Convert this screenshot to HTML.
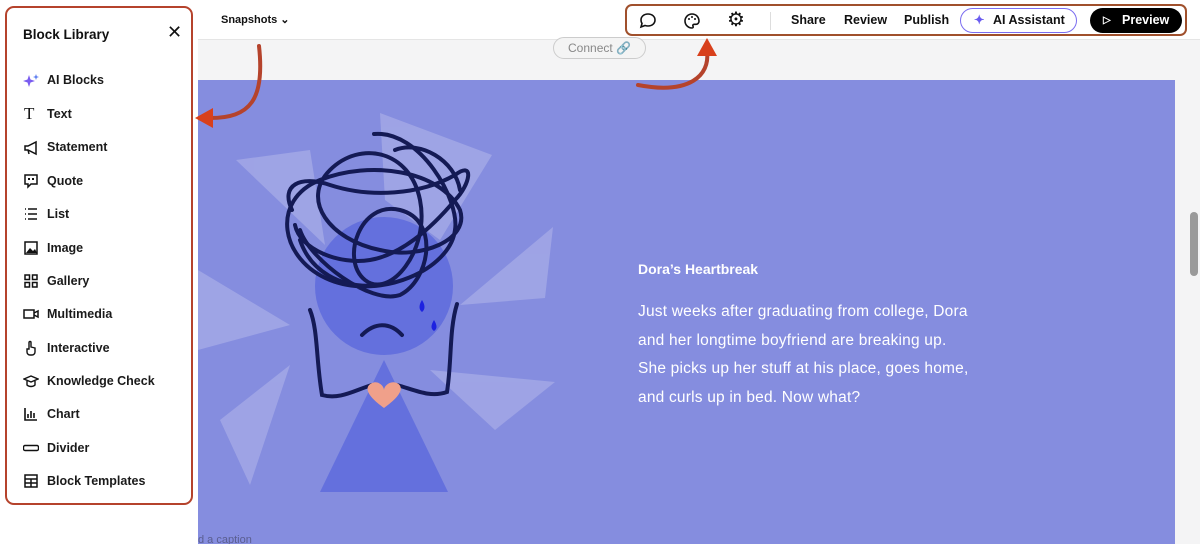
<!DOCTYPE html>
<html><head><meta charset="utf-8"><style>
*{margin:0;padding:0;box-sizing:border-box}
body{width:1200px;height:544px;overflow:hidden;background:#f4f4f5;font-family:"Liberation Sans",sans-serif;position:relative;color:#111}
.abs{position:absolute}
.top{left:0;top:0;width:1200px;height:40px;background:#fff;border-bottom:1px solid #e5e5e5}
.purple{left:198px;top:80px;width:977px;height:464px;background:#858ddf;overflow:hidden}
.panel{left:0;top:0;width:198px;height:544px;background:#fff}
.pborder{left:5px;top:6px;width:188px;height:499px;border:2px solid #b5432c;border-radius:9px}
.item{position:absolute;left:47px;font-size:12.5px;font-weight:bold;color:#1a1a1a}
.ic{position:absolute;left:23px;width:16px;height:16px}
.tb{position:absolute;top:4px;left:625px;width:562px;height:32px;border:2px solid #a0502c;border-radius:7px;background:#fff}
.tbt{position:absolute;top:13px;font-size:12.5px;font-weight:bold}
</style></head><body>
<div class="abs top"></div>
<div class="abs" style="left:221px;top:13px;font-size:11px;font-weight:bold">Snapshots ⌄</div>
<div class="abs" style="left:553px;top:37px;width:93px;height:22px;border:1px solid #ccc;border-radius:11px;background:#f4f4f4;font-size:12px;color:#888;text-align:center;line-height:20px">Connect 🔗</div>
<div class="abs purple">
<svg width="977" height="464" viewBox="198 80 977 464" style="position:absolute;left:0;top:0">
<g fill="#b3b7ea" opacity=".55">
<polygon points="380,113 492,155 440,240 385,200"/>
<polygon points="236,160 310,150 325,245"/>
<polygon points="553,227 545,298 460,305"/>
<polygon points="198,270 290,325 198,350"/>
<polygon points="290,365 220,420 250,485"/>
<polygon points="430,370 555,382 495,430"/>
</g>
<circle cx="384" cy="286" r="69" fill="#6470dd"/>
<polygon points="384,360 320,492 448,492" fill="#6470dd"/>
<g fill="none" stroke="#141a55" stroke-width="4" stroke-linecap="round">
<path d="M374,134 C420,130 460,200 455,230 C450,270 380,300 330,280 C280,260 270,200 320,180 C370,160 440,170 460,210 C470,240 420,260 380,250 C330,240 300,200 330,170 C360,140 410,150 420,200 C430,250 390,300 365,280 C340,260 360,200 400,210 C440,220 430,280 400,295 C370,305 310,260 300,230"/>
<path d="M292,210 C280,185 300,175 330,185 C370,198 420,195 455,175 C475,160 470,185 455,200 C430,230 400,255 370,260 C340,265 300,250 295,225 M395,150 C420,140 455,160 460,190 M300,240 C310,270 340,290 380,285"/>
<path d="M310,310 C318,330 316,360 322,395 C340,400 355,390 372,385"/>
<path d="M457,304 C449,330 452,360 447,392 C430,398 415,390 397,385"/>
<path d="M362,335 C375,322 390,322 402,335"/>
</g>
<path d="M422,300 q-5,8 0,12 q5,-4 0,-12z M434,320 q-5,8 0,11 q5,-3 0,-11z" fill="#1d22e0"/>
<path d="M384,408 C370,398 362,388 372,383 C378,380 384,386 384,390 C384,386 390,380 397,383 C406,388 398,398 384,408z" fill="#f0a08a"/>
</svg>
<div class="abs" style="left:440px;top:181px;color:#fff;font-weight:bold;font-size:14px">Dora’s Heartbreak</div>
<div class="abs" style="left:440px;top:218px;white-space:nowrap;color:#fff;font-size:15.5px;line-height:28.5px;letter-spacing:.2px">Just weeks after graduating from college, Dora<br>and her longtime boyfriend are breaking up.<br>She picks up her stuff at his place, goes home,<br>and curls up in bed. Now what?</div>
<div class="abs" style="left:0;top:454px;color:#5a5e90;font-size:11px">d a caption</div>
</div>
<div class="abs" style="left:1190px;top:212px;width:8px;height:64px;background:#9a9a9a;border-radius:4px"></div>
<div class="abs panel">
<div class="abs" style="left:23px;top:27px;font-size:13.5px;font-weight:bold">Block Library</div>
<div class="abs" style="left:167px;top:22px;font-size:18px">✕</div>
<svg class="ic" style="top:73px" viewBox="0 0 16 16"><path d="M6 2 L7.5 6.5 L12 8 L7.5 9.5 L6 14 L4.5 9.5 L0 8 L4.5 6.5Z" fill="#7a5cf0"/><path d="M13 1 l.8 2.2 2.2.8-2.2.8L13 7l-.8-2.2L10 4l2.2-.8Z" fill="#5b7cf0"/></svg>
<div class="item" style="top:73px">AI Blocks</div>
<div class="ic" style="top:104px;font-size:17px;font-family:'Liberation Serif';left:24px">T</div>
<div class="item" style="top:107px">Text</div>
<svg class="ic" style="top:140px" viewBox="0 0 16 16"><path d="M2 6h3l8-4v12l-8-4H2z M5 10l1 4" fill="none" stroke="#111" stroke-width="1.5"/></svg>
<div class="item" style="top:140px">Statement</div>
<svg class="ic" style="top:173px" viewBox="0 0 16 16"><path d="M2 2h12v9H8l-3 3v-3H2z" fill="none" stroke="#111" stroke-width="1.5"/><path d="M5 5h2v2H5zM9 5h2v2H9z" fill="#111"/></svg>
<div class="item" style="top:174px">Quote</div>
<svg class="ic" style="top:206px" viewBox="0 0 16 16"><path d="M2 3h1M2 8h1M2 13h1M5 3h9M5 8h9M5 13h9" stroke="#111" stroke-width="1.6"/></svg>
<div class="item" style="top:207px">List</div>
<svg class="ic" style="top:240px" viewBox="0 0 16 16"><rect x="2" y="2" width="12" height="12" fill="none" stroke="#111" stroke-width="1.5"/><path d="M3 13l4-5 3 3 2-2 2 4z" fill="#111"/></svg>
<div class="item" style="top:241px">Image</div>
<svg class="ic" style="top:273px" viewBox="0 0 16 16"><g fill="none" stroke="#111" stroke-width="1.5"><rect x="2" y="2" width="4.5" height="4.5"/><rect x="9.5" y="2" width="4.5" height="4.5"/><rect x="2" y="9.5" width="4.5" height="4.5"/><rect x="9.5" y="9.5" width="4.5" height="4.5"/></g></svg>
<div class="item" style="top:274px">Gallery</div>
<svg class="ic" style="top:306px" viewBox="0 0 16 16"><rect x="1" y="4" width="10" height="8" fill="none" stroke="#111" stroke-width="1.5"/><path d="M11 7l4-2v6l-4-2" fill="none" stroke="#111" stroke-width="1.5"/></svg>
<div class="item" style="top:307px">Multimedia</div>
<svg class="ic" style="top:340px" viewBox="0 0 16 16"><path d="M6 9V2.5a1 1 0 012 0V7l4 1v4a3 3 0 01-3 3H7a3 3 0 01-3-3V9z" fill="none" stroke="#111" stroke-width="1.4"/></svg>
<div class="item" style="top:341px">Interactive</div>
<svg class="ic" style="top:373px" viewBox="0 0 16 16"><path d="M1 6l7-3 7 3-7 3z M4 8v4c2 2 6 2 8 0V8" fill="none" stroke="#111" stroke-width="1.4"/></svg>
<div class="item" style="top:374px">Knowledge Check</div>
<svg class="ic" style="top:406px" viewBox="0 0 16 16"><path d="M2 2v12h12M5 12V8M8 12V5M11 12V7" fill="none" stroke="#111" stroke-width="1.6"/></svg>
<div class="item" style="top:407px">Chart</div>
<svg class="ic" style="top:440px" viewBox="0 0 16 16"><rect x="0.5" y="5.5" width="15" height="5" rx="1.5" fill="none" stroke="#111" stroke-width="1.4"/></svg>
<div class="item" style="top:441px">Divider</div>
<svg class="ic" style="top:473px" viewBox="0 0 16 16"><rect x="2" y="2" width="12" height="12" fill="none" stroke="#111" stroke-width="1.5"/><path d="M2 6h12M2 10h12M8 6v8" stroke="#111" stroke-width="1.5"/></svg>
<div class="item" style="top:474px">Block Templates</div>
</div>
<div class="abs pborder"></div>
<div class="tb">
<svg class="abs" style="left:12px;top:6px" width="18" height="18" viewBox="0 0 18 18"><path d="M9 2c4 0 7 2.5 7 6s-3 6-7 6c-1 0-2-.2-3-.5L2 15l1-3.5C2.3 10.5 2 9.3 2 8c0-3.5 3-6 7-6z" fill="none" stroke="#111" stroke-width="1.6"/></svg>
<svg class="abs" style="left:56px;top:6px" width="18" height="18" viewBox="0 0 18 18"><path d="M9 2a7 7 0 100 14c1 0 1.5-.8 1-1.7-.5-1 0-2 1.2-2H13a3 3 0 003-3C16 5 13 2 9 2z" fill="none" stroke="#111" stroke-width="1.6"/><circle cx="6" cy="7" r="1" fill="#111"/><circle cx="9" cy="5" r="1" fill="#111"/><circle cx="12" cy="7" r="1" fill="#111"/></svg>
<div class="abs" style="left:100px;top:1px;font-size:20px">⚙</div>
<div class="abs" style="left:143px;top:6px;width:1px;height:18px;background:#ddd"></div>
<div class="tbt" style="left:164px;top:7px">Share</div>
<div class="tbt" style="left:217px;top:7px">Review</div>
<div class="tbt" style="left:277px;top:7px">Publish</div>
<div class="abs" style="left:333px;top:2px;width:117px;height:25px;border:1.5px solid #7a6cf0;border-radius:13px;font-size:12.5px;font-weight:bold;line-height:22px;padding-left:32px">AI Assistant<span style="position:absolute;left:13px;color:#6a5cf0">✦</span></div>
<div class="abs" style="left:463px;top:2px;width:92px;height:25px;background:#000;border-radius:13px;color:#fff;font-size:12.5px;font-weight:bold;line-height:25px;padding-left:32px">Preview<span style="position:absolute;left:13px;font-size:10px">▷</span></div>
</div>
<svg class="abs" style="left:0;top:0" width="1200" height="544"><g fill="none" stroke="#b5432c" stroke-width="4" stroke-linecap="round"><path d="M259,46 C265,100 250,118 210,118"/><path d="M638,85 C690,95 710,75 707,52"/></g><polygon points="195,118 213,108 213,128" fill="#d8401c"/><polygon points="707,38 697,56 717,56" fill="#d8401c"/></svg>
</body></html>
